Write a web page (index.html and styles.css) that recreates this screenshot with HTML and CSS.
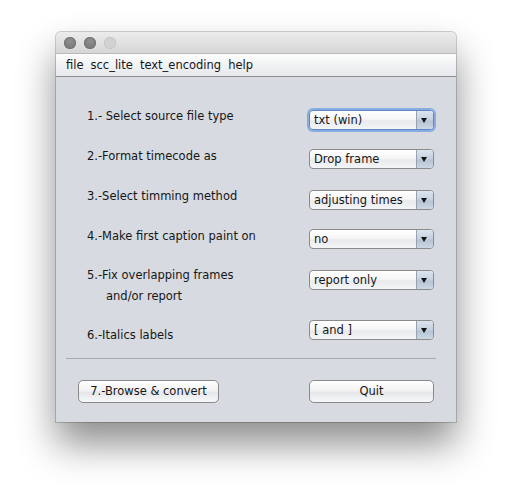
FILE: index.html
```html
<!DOCTYPE html>
<html>
<head>
<meta charset="utf-8">
<link rel="stylesheet" href="styles.css">
</head>
<body>
<div class="window">
  <div class="titlebar">
    <span class="light dark"></span>
    <span class="light dark"></span>
    <span class="light pale"></span>
  </div>
  <div class="menubar">
    <span class="menu">file</span>
    <span class="menu">scc_lite</span>
    <span class="menu">text_encoding</span>
    <span class="menu">help</span>
  </div>
  <div class="content">
    <div class="row r1">
      <div class="label l1">1.- Select source file type</div>
      <div class="combo focused"><span class="value">txt (win)</span><span class="arrow"></span></div>
    </div>
    <div class="row r2">
      <div class="label">2.-Format timecode as</div>
      <div class="combo"><span class="value">Drop frame</span><span class="arrow"></span></div>
    </div>
    <div class="row r3">
      <div class="label">3.-Select timming method</div>
      <div class="combo"><span class="value">adjusting times</span><span class="arrow"></span></div>
    </div>
    <div class="row r4">
      <div class="label">4.-Make first caption paint on</div>
      <div class="combo"><span class="value">no</span><span class="arrow"></span></div>
    </div>
    <div class="row r5">
      <div class="label two">5.-Fix overlapping frames<br><span class="indent">and/or report</span></div>
      <div class="combo"><span class="value">report only</span><span class="arrow"></span></div>
    </div>
    <div class="row r6">
      <div class="label">6.-Italics labels</div>
      <div class="combo"><span class="value">[ and ]</span><span class="arrow"></span></div>
    </div>
    <div class="separator"></div>
    <div class="buttons">
      <div class="button browse">7.-Browse &amp; convert</div>
      <div class="button quit">Quit</div>
    </div>
  </div>
</div>
</body>
</html>
```
FILE: styles.css
```css
html, body {
  margin: 0;
  padding: 0;
  background: #ffffff;
}
body {
  font-family: "DejaVu Sans", "Liberation Sans", sans-serif;
  font-size: 11.5px;
  color: #161616;
  padding: 32px 0 0 56px;
  height: 502px;
  box-sizing: border-box;
}
.window {
  width: 400px;
  height: 390px;
  background: #d7dae1;
  border-radius: 5px 5px 0 0;
  box-shadow: 0 22px 38px rgba(0, 0, 0, 0.45), 0 0 0 1px rgba(0, 0, 0, 0.18);
  display: flex;
  flex-direction: column;
}
.titlebar {
  height: 21px;
  border-radius: 5px 5px 0 0;
  background: linear-gradient(#ececec, #d6d6d6);
  display: flex;
  align-items: center;
  gap: 8px;
  padding-left: 8px;
  box-sizing: border-box;
}
.light {
  width: 12px;
  height: 12px;
  border-radius: 50%;
}
.light.dark {
  background: radial-gradient(circle at 50% 35%, #8e8e8e, #727272);
  box-shadow: inset 0 0 0 0.5px #666;
}
.light.pale {
  background: #d2d2d2;
  box-shadow: inset 0 0 0 0.5px #bcbcbc;
}
.menubar {
  height: 24px;
  background: linear-gradient(#fdfdfd, #f1f2f4 50%, #e6e8ec);
  border-top: 1px solid #b9b9b9;
  border-bottom: 1px solid #8e8e8e;
  box-sizing: border-box;
  display: flex;
  align-items: center;
  padding-left: 10px;
  gap: 7px;
  font-size: 11.5px;
}
.content {
  padding: 23px 22px 0 31px;
  display: flex;
  flex-direction: column;
}
.row {
  display: flex;
  align-items: flex-start;
  justify-content: space-between;
  height: 40px;
}
.row.r5 { height: 50px; }
.label {
  line-height: 16px;
  padding-top: 8px;
}
.label.two {
  line-height: 21px;
  padding-top: 5px;
}
.indent { padding-left: 19px; }
.r6 .label { padding-top: 17px; }
.combo {
  width: 125px;
  height: 20px;
  box-sizing: border-box;
  margin-top: 10px;
  border: 1px solid #8b8b8b;
  border-radius: 4px;
  background: linear-gradient(#ffffff, #f6f6f7 45%, #e9eaed 55%, #f4f5f6);
  display: flex;
  align-items: stretch;
  overflow: hidden;
}
.r2 .combo, .r4 .combo { margin-top: 9px; }
.combo.focused {
  border-color: #5d86c4;
  box-shadow: 0 0 0 2px rgba(110, 156, 222, 0.75);
}
.value {
  flex: 1;
  padding-left: 4px;
  line-height: 18px;
}
.arrow {
  width: 16px;
  border-left: 1px solid #9aa3ad;
  background: linear-gradient(#dce5ef, #c3d0de 50%, #b5c5d6 55%, #cbd7e4);
  position: relative;
}
.arrow::after {
  content: "";
  position: absolute;
  left: 4px;
  top: 7px;
  border-left: 3.5px solid transparent;
  border-right: 3.5px solid transparent;
  border-top: 5px solid #111;
}
.separator {
  height: 1px;
  background: #a9abb0;
  margin: 8px 0 0 -21px;
  width: 370px;
}
.buttons {
  display: flex;
  justify-content: space-between;
  margin-top: 21px;
  margin-left: -9px;
}
.button {
  height: 23px;
  box-sizing: border-box;
  border: 1px solid #8a8a8a;
  border-radius: 5px;
  background: linear-gradient(#ffffff, #f3f3f4 45%, #e6e7ea 55%, #f7f8f9);
  line-height: 21px;
  text-align: center;
}
.browse { width: 141px; }
.quit { width: 125px; }
```
